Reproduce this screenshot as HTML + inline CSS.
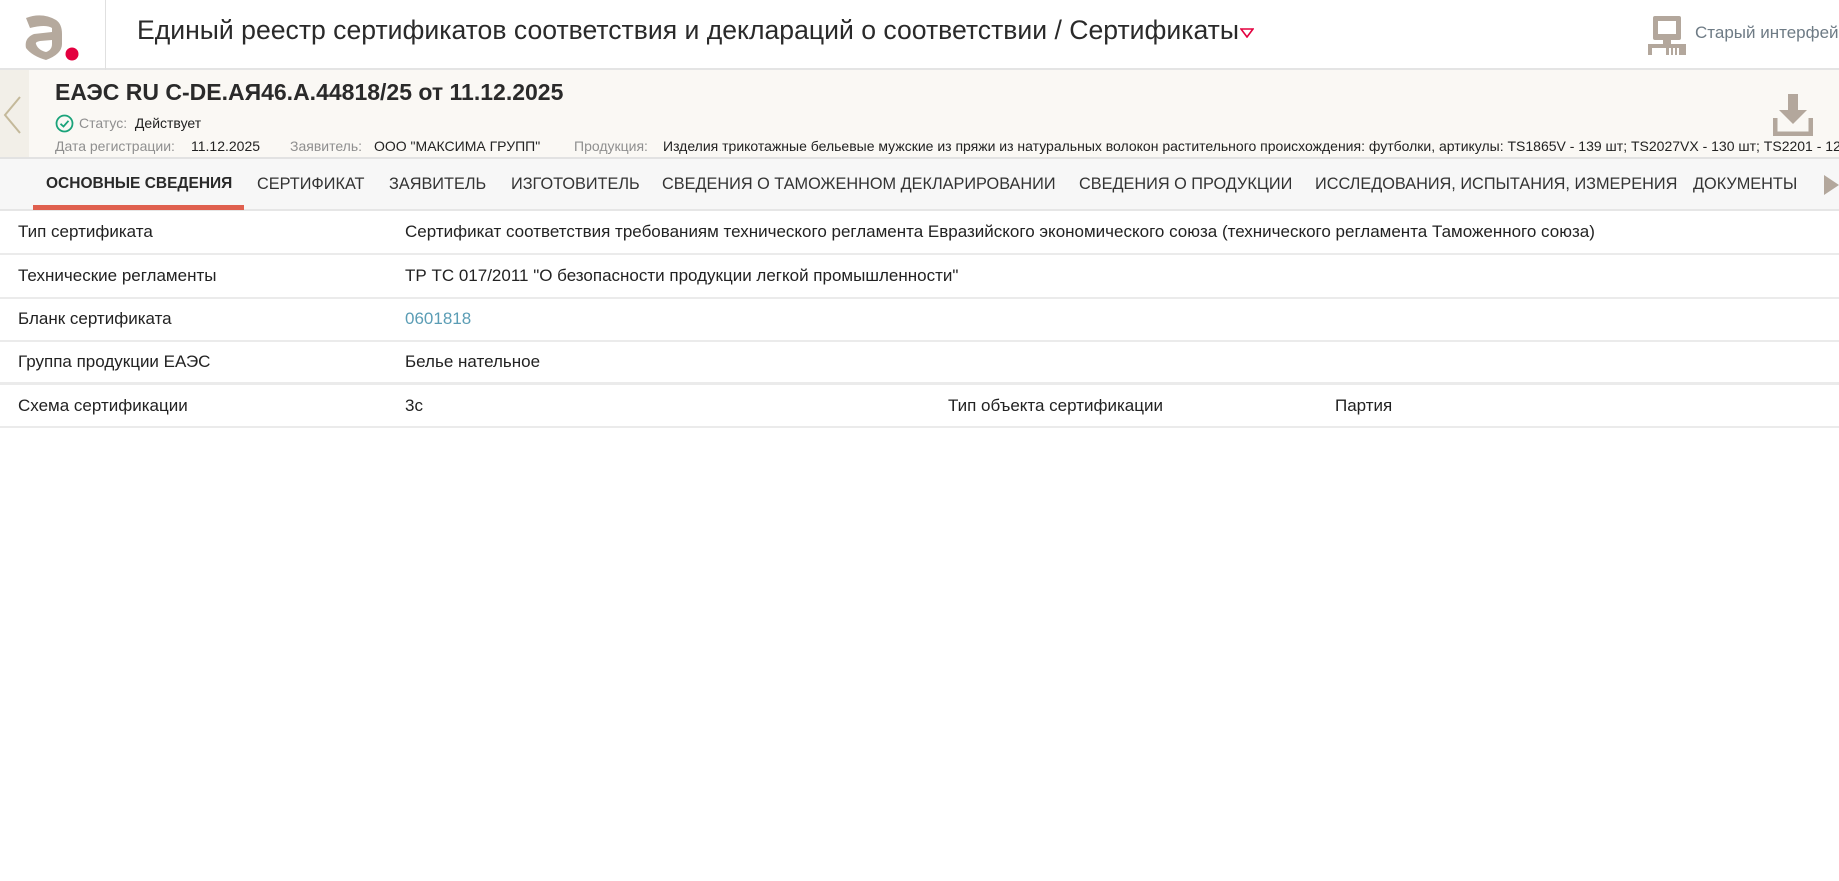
<!DOCTYPE html>
<html><head><meta charset="utf-8"><style>
*{margin:0;padding:0;box-sizing:border-box}
body{width:1839px;height:881px;overflow:hidden;background:#fff;font-family:"Liberation Sans","Noto Sans CJK SC",sans-serif;color:#222;position:relative}
.abs{position:absolute;white-space:nowrap}
.hdr{position:absolute;left:0;top:0;width:1839px;height:70px;border-bottom:2px solid #e4e4e4;background:#fff}
.sub{position:absolute;left:0;top:70px;width:1839px;height:89px;background:#faf8f4;border-bottom:2px solid #e2e2e2;overflow:hidden}
.tabs{position:absolute;left:0;top:159px;width:1839px;height:52px;background:#f7f7f7;border-bottom:2px solid #e6e6e6}
.tab{position:absolute;top:16px;font-size:16.3px;color:#333;white-space:nowrap}
.row{position:absolute;left:0;width:1839px;height:44px;border-bottom:2px solid #ebebeb;font-size:17px}
.row span{position:absolute;top:11px;white-space:nowrap}
.g{color:#8f8f8f}
</style></head><body>
<div class="hdr">
  <svg class="abs" style="left:22px;top:14px" width="60" height="50" viewBox="0 0 60 50">
    <path d="M4 4 Q20 -2 34 6 Q40 10 40 20 L40 30 Q40 40 24 46 Q10 42 4 34 Q2 24 12 20 L30 18 L30 14 Q24 10 8 14 Z M14 30 Q16 36 24 38 Q30 36 30 30 L30 26 L18 27 Q13 28 14 30 Z" fill="#b5a99d"/>
    <circle cx="50" cy="40" r="6.5" fill="#e3003f"/>
  </svg>
  <div class="abs" style="left:105px;top:0;width:1px;height:70px;background:#e0e0e0"></div>
  <div class="abs" style="left:137px;top:15px;font-size:26.6px;color:#2a2a2a">Единый реестр сертификатов соответствия и деклараций о соответствии / Сертификаты</div>
  <svg class="abs" style="left:1240px;top:28px" width="14" height="10"><path d="M1 1 L13 1 L7 9 Z" fill="none" stroke="#e3003f" stroke-width="1.6"/></svg>
  <svg class="abs" style="left:1648px;top:15px" width="38" height="40" viewBox="0 0 38 40">
    <rect x="5" y="1" width="28" height="24" rx="2" fill="#b3a79c"/>
    <rect x="10" y="6" width="18" height="13" fill="#fff"/>
    <rect x="15" y="25" width="8" height="4" fill="#b3a79c"/>
    <rect x="0" y="29" width="38" height="11" fill="#b3a79c"/>
    <rect x="4" y="33" width="14" height="7" fill="#fff"/>
    <rect x="21" y="33" width="2" height="7" fill="#fff"/><rect x="25" y="33" width="2" height="7" fill="#fff"/><rect x="29" y="33" width="2" height="7" fill="#fff"/>
  </svg>
  <div class="abs" style="left:1695px;top:23px;font-size:17px;color:#6e7b85">Старый интерфейс</div>
</div>
<div class="sub">
  <div class="abs" style="left:0;top:0;width:29px;height:89px;background:#f2efe8"></div>
  <svg class="abs" style="left:2px;top:26px" width="20" height="38"><path d="M18 1 L3 19 L18 37" fill="none" stroke="#c4b99a" stroke-width="2"/></svg>
  <div class="abs" style="left:55px;top:9px;font-size:23px;font-weight:bold;color:#2a2a2a">ЕАЭС RU C-DE.АЯ46.А.44818/25 от 11.12.2025</div>
  <svg class="abs" style="left:55px;top:44px" width="19" height="19"><circle cx="9.5" cy="9.5" r="8" fill="none" stroke="#1aa37a" stroke-width="1.8"/><path d="M5.5 9.8 L8.5 12.5 L13.5 6.8" fill="none" stroke="#1aa37a" stroke-width="1.8"/></svg>
  <div class="abs" style="left:79px;top:45px;font-size:14px"><span class="g">Статус:</span>&nbsp; Действует</div>
  <div class="abs" style="left:55px;top:68px;font-size:14px"><span class="g">Дата регистрации:</span></div>
  <div class="abs" style="left:191px;top:68px;font-size:14px">11.12.2025</div>
  <div class="abs" style="left:290px;top:68px;font-size:14px" ><span class="g">Заявитель:</span></div>
  <div class="abs" style="left:374px;top:68px;font-size:14px">ООО "МАКСИМА ГРУПП"</div>
  <div class="abs" style="left:574px;top:68px;font-size:14px"><span class="g">Продукция:</span></div>
  <div class="abs" style="left:663px;top:68px;font-size:14px">Изделия трикотажные бельевые мужские из пряжи из натуральных волокон растительного происхождения: футболки, артикулы: TS1865V - 139 шт; TS2027VX - 130 шт; TS2201 - 120 шт</div>
  <svg class="abs" style="left:1773px;top:24px" width="40" height="42" viewBox="0 0 40 42">
    <rect x="15" y="0" width="10" height="18" fill="#b3a79c"/>
    <path d="M6 16 L34 16 L20 30 Z" fill="#b3a79c"/>
    <path d="M2 24 L2 40 L38 40 L38 24" fill="none" stroke="#b3a79c" stroke-width="5"/>
  </svg>
</div>
<div class="tabs">
  <div class="tab" style="left:46px;font-weight:bold;font-size:15.5px;color:#2a2a2a">ОСНОВНЫЕ СВЕДЕНИЯ</div>
  <div class="tab" style="left:257px">СЕРТИФИКАТ</div>
  <div class="tab" style="left:389px">ЗАЯВИТЕЛЬ</div>
  <div class="tab" style="left:511px">ИЗГОТОВИТЕЛЬ</div>
  <div class="tab" style="left:662px">СВЕДЕНИЯ О ТАМОЖЕННОМ ДЕКЛАРИРОВАНИИ</div>
  <div class="tab" style="left:1079px">СВЕДЕНИЯ О ПРОДУКЦИИ</div>
  <div class="tab" style="left:1315px">ИССЛЕДОВАНИЯ, ИСПЫТАНИЯ, ИЗМЕРЕНИЯ</div>
  <div class="tab" style="left:1693px">ДОКУМЕНТЫ</div>
  <svg class="abs" style="left:1824px;top:16px" width="15" height="20"><path d="M0 0 L15 10 L0 20 Z" fill="#b3a79c"/></svg>
  <div class="abs" style="left:33px;top:46px;width:211px;height:5px;background:#e0604f"></div>
</div>
<div class="row" style="top:211px"><span style="left:18px">Тип сертификата</span><span style="left:405px">Сертификат соответствия требованиям технического регламента Евразийского экономического союза (технического регламента Таможенного союза)</span></div>
<div class="row" style="top:255px"><span style="left:18px">Технические регламенты</span><span style="left:405px">ТР ТС 017/2011 "О безопасности продукции легкой промышленности"</span></div>
<div class="row" style="top:298px"><span style="left:18px">Бланк сертификата</span><span style="left:405px;color:#5b9db5">0601818</span></div>
<div class="row" style="top:341px;height:44px;border-bottom:3px solid #ebebeb"><span style="left:18px">Группа продукции ЕАЭС</span><span style="left:405px">Белье нательное</span></div>
<div class="row" style="top:385px;height:43px"><span style="left:18px">Схема сертификации</span><span style="left:405px">3с</span><span style="left:948px">Тип объекта сертификации</span><span style="left:1335px">Партия</span></div>
</body></html>
